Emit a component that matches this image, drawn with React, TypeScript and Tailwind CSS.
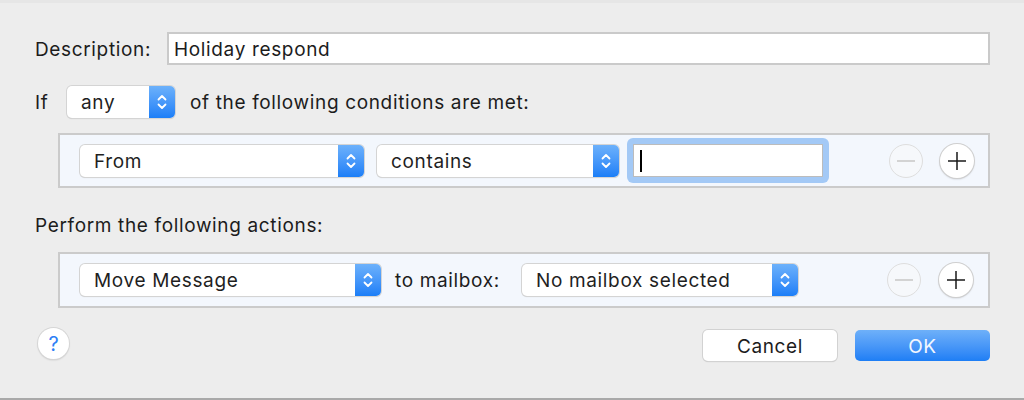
import React from "react";

const Arrows: React.FC = () => (
  <svg width="12" height="18" viewBox="0 0 12 18" fill="none" stroke="white" strokeWidth="1.8" strokeLinecap="round" strokeLinejoin="round">
    <path d="M2.5 6.5 L6 3 L9.5 6.5" />
    <path d="M2.5 11.5 L6 15 L9.5 11.5" />
  </svg>
);

const Popup: React.FC<{ label: string; width: string }> = ({ label, width }) => (
  <div className={`${width} h-[32px] flex rounded-[5px] bg-white shadow-[0_0_0_1px_#d4d4d4,0_1px_1px_rgba(0,0,0,0.18)]`}>
    <div className="flex-1 pl-[14px] pt-[3px] flex items-center text-[#1f1f1f]">{label}</div>
    <div className="w-[26px] rounded-r-[5px] bg-gradient-to-b from-[#6cb1fb] to-[#1a7ef7] flex items-center justify-center">
      <Arrows />
    </div>
  </div>
);

const MinusBtn: React.FC = () => (
  <div className="w-[34px] h-[34px] rounded-full bg-[#f6f8fb] border border-[#dedede] flex items-center justify-center">
    <div className="w-[18px] h-[2px] bg-[#d3d3d3]" />
  </div>
);

const PlusBtn: React.FC = () => (
  <div className="w-[34px] h-[34px] rounded-full bg-white shadow-[0_0_0_1px_#cfcfcf,0_1px_2px_rgba(0,0,0,0.25)] flex items-center justify-center">
    <svg width="20" height="20" viewBox="0 0 20 20" stroke="#1a1a1a" strokeWidth="1.5">
      <path d="M10 1 V19 M1 10 H19" />
    </svg>
  </div>
);

export default function App() {
  return (
    <div className="w-[1024px] h-[400px] bg-[#ededed] border-t-[3px] border-t-[#e6e6e6] border-b-2 border-b-[#a9a9a9] overflow-hidden text-[19px] tracking-[0.65px] text-[#1c1c1c] [font-family:Inter,'Liberation_Sans',sans-serif]">
      <div className="pl-[35px] pr-[34px] pt-[29px]">
        {/* description */}
        <div className="flex items-center h-[33px]">
          <div className="w-[132px] pt-[3px]">Description:</div>
          <div className="flex-1 h-full bg-white border-2 border-[#cacaca] flex items-center pl-[5px] pt-[3px]">Holiday respond</div>
        </div>

        {/* if row */}
        <div className="flex items-center h-[31px] mt-[21px]">
          <div className="w-[32px] pt-[3px]">If</div>
          <Popup label="any" width="w-[108px]" />
          <div className="ml-[15px] pt-[3px]">of the following conditions are met:</div>
        </div>

        {/* conditions */}
        <div className="ml-[23px] mt-[16px] h-[55px] border-2 border-[#cbcbcb] bg-[#f3f7fd] flex items-center pl-[20px]">
          <Popup label="From" width="w-[284px]" />
          <div className="ml-[13px]">
            <Popup label="contains" width="w-[242px]" />
          </div>
          <div className="ml-[8px] w-[202px] h-[45px] rounded-[6px] bg-[#a3c9f6] p-[6px]">
            <div className="w-full h-full bg-white border border-[#bcbcbc] flex items-center pl-[6px]">
              <div className="w-[2px] h-[22px] bg-black" />
            </div>
          </div>
          <div className="ml-[60px]"><MinusBtn /></div>
          <div className="ml-[17px]"><PlusBtn /></div>
        </div>

        <div className="mt-[27px] h-[22px] leading-[22px]">Perform the following actions:</div>

        {/* actions */}
        <div className="ml-[23px] mt-[15px] h-[56px] border-2 border-[#cbcbcb] bg-[#f3f7fd] flex items-center pl-[20px]">
          <Popup label="Move Message" width="w-[301px]" />
          <div className="w-[141px] pl-[14px] pt-[3px]">to mailbox:</div>
          <Popup label="No mailbox selected" width="w-[276px]" />
          <div className="ml-[89px]"><MinusBtn /></div>
          <div className="ml-[18px]"><PlusBtn /></div>
        </div>

        {/* footer */}
        <div className="mt-[20px] flex items-start justify-between">
          <div className="ml-[3px] w-[31px] h-[31px] rounded-full bg-white shadow-[0_0_0_1px_#d6d6d6,0_1px_2px_rgba(0,0,0,0.2)] flex items-center justify-center text-[#2d7ff6] text-[20px] leading-none tracking-normal">?</div>
          <div className="mt-[2px] flex gap-[18px]">
            <div className="w-[134px] h-[31px] pt-[3px] rounded-[5px] bg-white shadow-[0_0_0_1px_#d2d2d2,0_1px_1px_rgba(0,0,0,0.2)] flex items-center justify-center">Cancel</div>
            <div className="w-[135px] h-[31px] pt-[3px] rounded-[5px] bg-gradient-to-b from-[#6eb0f9] to-[#1d7ef5] flex items-center justify-center text-[#f2f7ff]">OK</div>
          </div>
        </div>
      </div>
    </div>
  );
}
